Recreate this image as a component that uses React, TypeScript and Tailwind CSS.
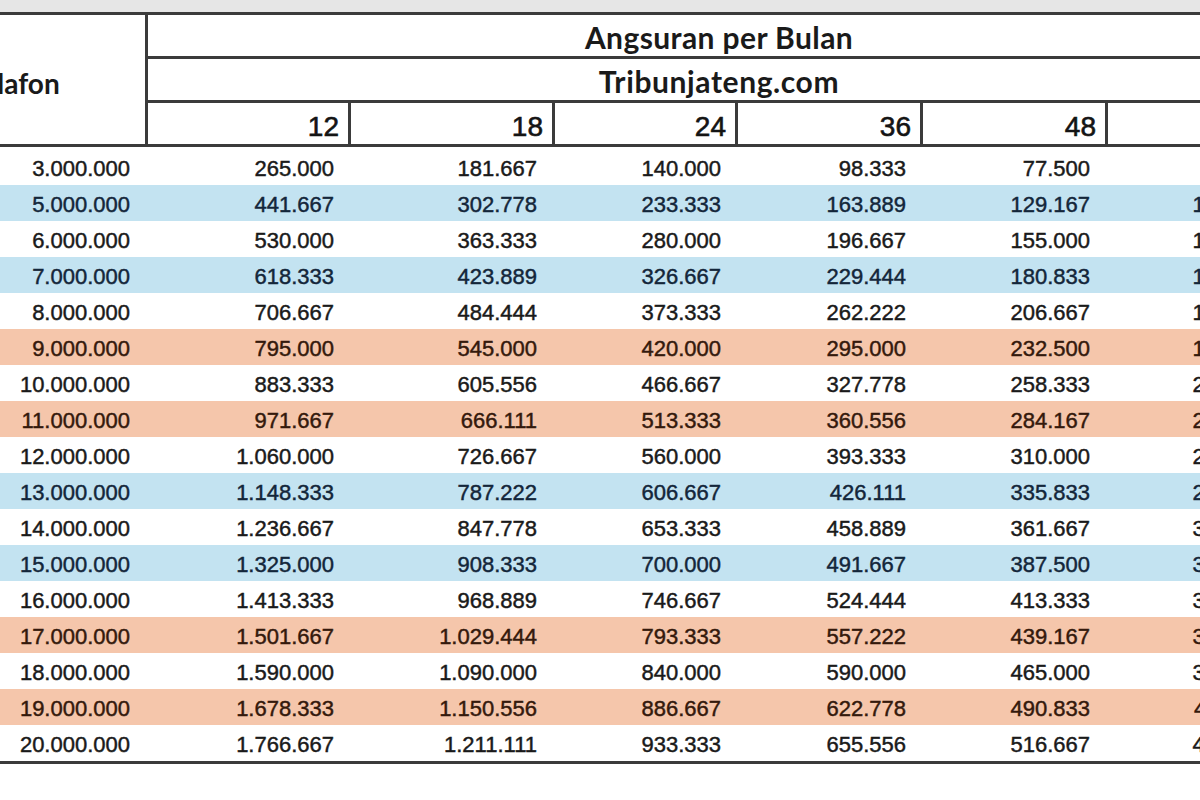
import React from 'react'

const plafon = [3, 5, 6, 7, 8, 9, 10, 11, 12, 13, 14, 15, 16, 17, 18, 19, 20]
const tenor = [12, 18, 24, 36, 48, 60]

// column widths incl. the 3px left rule of each tenor column
const widths = ['w-[203px]', 'w-[204px]', 'w-[183px]', 'w-[185px]', 'w-[185px]', 'w-[181px]']
const padR = ['pr-[14px]', 'pr-[15px]', 'pr-[14px]', 'pr-[14px]', 'pr-[15px]', 'pr-[14px]']

const blue = [5, 7, 13, 15]
const orange = [9, 11, 17, 19]

function fmt(n: number) {
    return Math.round(n).toString().replace(/\B(?=(\d{3})+(?!\d))/g, '.')
}

function angsuran(juta: number, bulan: number) {
    const pokok = juta * 1000000
    return fmt(pokok / bulan + pokok * 0.005)
}

function App() {
    return (
        <div className="w-[1200px] h-[800px] bg-white overflow-hidden">
            <div className="h-[12px] bg-[#e6e6e6]" />
            <div className="w-[1290px] border-t-[3px] border-[#3b3b3b]">
                {/* Header */}
                <div className="flex border-b-[3px] border-[#3b3b3b]">
                    <div className="w-[145px] shrink-0 flex items-center pt-[6px]">
                        <span className="ml-[-20px] text-[28px] font-bold text-[#1a1a1a] font-['Lato',sans-serif] whitespace-nowrap">
                            Plafon
                        </span>
                    </div>
                    <div className="flex-1 border-l-[3px] border-[#3b3b3b] flex flex-col">
                        <div className="h-[44px] flex items-center justify-center pt-[3px] border-b-[3px] border-[#3b3b3b] text-[30px] font-bold tracking-[0.4px] text-[#1a1a1a] font-['Lato',sans-serif]">
                            Angsuran per Bulan
                        </div>
                        <div className="h-[44px] flex items-center justify-center pt-[3px] border-b-[3px] border-[#3b3b3b] text-[30px] font-bold tracking-[0.6px] text-[#1a1a1a] font-['Lato',sans-serif]">
                            Tribunjateng.com
                        </div>
                        <div className="flex h-[41px] ml-[-3px]">
                            {tenor.map((t, i) => (
                                <div
                                    key={t}
                                    className={`${widths[i]} shrink-0 border-l-[3px] border-[#3b3b3b] flex items-end justify-end pr-[9px] pb-[3px] text-[28px] leading-none text-[#141414] [-webkit-text-stroke:0.6px_#141414] font-['Liberation_Sans',sans-serif]`}
                                >
                                    {t}
                                </div>
                            ))}
                        </div>
                    </div>
                </div>

                {/* Body */}
                <div className="border-b-[3px] border-[#3b3b3b] font-['Liberation_Sans',sans-serif] text-[22px] [-webkit-text-stroke:0.45px_currentColor]">
                    {plafon.map((p, r) => {
                        const bg = blue.includes(p)
                            ? 'bg-[#c3e3f1] text-[#13263a]'
                            : orange.includes(p)
                              ? 'bg-[#f5c6ab] text-[#34190c]'
                              : 'bg-white text-[#1a1a1a]'
                        return (
                            <div key={p} className={`flex items-center ${r === 0 ? 'h-[38px] pt-[5px]' : 'h-[36px] pt-[3px]'} ${bg}`}>
                                <div className="w-[145px] shrink-0 text-right pr-[15px]">{fmt(p * 1000000)}</div>
                                {tenor.map((t, i) => (
                                    <div key={t} className={`${widths[i]} shrink-0 text-right ${padR[i]}`}>
                                        {angsuran(p, t)}
                                    </div>
                                ))}
                            </div>
                        )
                    })}
                </div>
            </div>
        </div>
    )
}

export default App
